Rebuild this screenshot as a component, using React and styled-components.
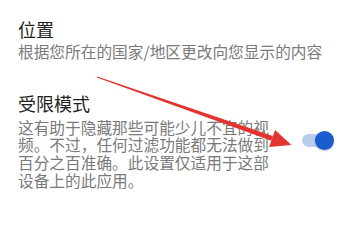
import React from 'react';
import styled, { createGlobalStyle } from 'styled-components';

const GlobalStyle = createGlobalStyle`
  html, body {
    margin: 0;
    padding: 0;
    background: #ffffff;
  }
  body {
    font-family: "Noto Sans CJK SC", "Noto Sans", sans-serif;
  }
`;

const Page = styled.div`
  position: relative;
  width: 356px;
  height: 205px;
  overflow: hidden;
  background: #ffffff;
  padding: 18px 0 0 18px;
  box-sizing: border-box;
`;

const Section = styled.div`
  display: flex;
  align-items: center;
  margin-top: ${(p) => p.$gap || 0}px;
`;

const TextBlock = styled.div`
  display: flex;
  flex-direction: column;
  width: ${(p) => p.$width}px;
`;

const Title = styled.div`
  font-size: 18px;
  line-height: 22px;
  color: #1f1f1f;
`;

const Summary = styled.div`
  font-size: 15.7px;
  line-height: 17.7px;
  color: #7a7a7a;
  margin-top: ${(p) => p.$top || 0}px;
`;

const Switch = styled.div`
  position: relative;
  width: 30px;
  height: 13px;
  border-radius: 7px;
  background: #b9cdef;
  margin-left: 22px;
`;

const Knob = styled.div`
  position: absolute;
  right: -2px;
  top: 50%;
  width: 19px;
  height: 19px;
  margin-top: -9.5px;
  border-radius: 50%;
  background: #1a5dce;
  box-shadow: 0 1px 2px rgba(0, 0, 0, 0.25);
`;

const Arrow = styled.svg`
  position: absolute;
  left: 0;
  top: 0;
  pointer-events: none;
`;

export default function App() {
  return (
    <>
      <GlobalStyle />
      <Page>
        <Section>
          <TextBlock $width={330}>
            <Title>位置</Title>
            <Summary $top={3}>根据您所在的国家/地区更改向您显示的内容</Summary>
          </TextBlock>
        </Section>

        <Section $gap={31}>
          <TextBlock $width={262}>
            <Title>受限模式</Title>
            <Summary $top={5}>
              这有助于隐藏那些可能少儿不宜的视频。不过，任何过滤功能都无法做到百分之百准确。此设置仅适用于这部设备上的此应用。
            </Summary>
          </TextBlock>
          <Switch>
            <Knob />
          </Switch>
        </Section>

        {/* red annotation arrow drawn over the page */}
        <Arrow width="356" height="205" viewBox="0 0 356 205">
          <polygon
            points="97.2,76.4 272.9,136 271.3,140.8 96.8,77.6"
            fill="#e3342f"
          />
          <polygon points="291.5,145 269.1,146.9 275.1,129.9" fill="#e3342f" />
        </Arrow>
      </Page>
    </>
  );
}
